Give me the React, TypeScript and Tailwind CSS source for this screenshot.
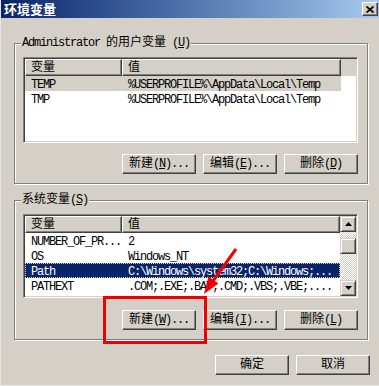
import type { ReactNode } from 'react'

const userVars = [
  { name: 'TEMP', value: '%USERPROFILE%\\AppData\\Local\\Temp', state: 'muted' },
  { name: 'TMP', value: '%USERPROFILE%\\AppData\\Local\\Temp', state: '' },
]

const sysVars = [
  { name: 'NUMBER_OF_PR...', value: '2', state: '' },
  { name: 'OS', value: 'Windows_NT', state: '' },
  { name: 'Path', value: 'C:\\Windows\\system32;C:\\Windows;...', state: 'active' },
  { name: 'PATHEXT', value: '.COM;.EXE;.BAT;.CMD;.VBS;.VBE;....', state: '' },
]

// ascii text, roughly the width of the old bitmap font
function A({ children }: { children: ReactNode }) {
  return <span className="text-[12px] tracking-[-1.2px]">{children}</span>
}

function Btn({ label, hotkey, dots, className = '' }: { label: string; hotkey?: string; dots?: boolean; className?: string }) {
  return (
    <div
      className={`w-[74px] h-[20px] flex items-center justify-center bg-[#d4d0c8] border border-t-white border-l-white border-r-[#404040] border-b-[#404040] shadow-[inset_-1px_-1px_0_#808080] text-[12px] leading-[14px] text-black ${className}`}
    >
      <span>{label}</span>
      {hotkey && (
        <A>
          {' '}(<span className="underline">{hotkey}</span>){dots ? '...' : ''}
        </A>
      )}
    </div>
  )
}

function Group({ label, children, className = '' }: { label: ReactNode; children: ReactNode; className?: string }) {
  return (
    <div className={`relative w-[354px] border border-[#808080] shadow-[inset_1px_1px_0_#fff,1px_1px_0_#fff] pt-[13px] pl-[8px] pr-[9px] pb-[9px] ${className}`}>
      <div className="absolute -top-[8px] left-[6px] bg-[#d4d0c8] px-[1px] text-[12px] leading-[14px] text-black whitespace-nowrap">
        {label}
      </div>
      {children}
    </div>
  )
}

function Row({ name, value, state, colTwo }: { name: string; value: string; state: string; colTwo: string }) {
  const tone =
    state === 'active'
      ? 'bg-[#0a246a] text-white outline-1 outline-dotted outline-[#d4d0c8] -outline-offset-1'
      : state === 'muted'
        ? 'bg-[#d4d0c8] text-black'
        : 'text-black'
  return (
    <div className={`flex h-[15px] items-center w-fit ${tone}`}>
      <div className="w-[97px] pl-[6px] whitespace-nowrap overflow-hidden">
        <A>{name}</A>
      </div>
      <div className={`${colTwo} pl-[6px] whitespace-nowrap overflow-hidden`}>
        <A>{value}</A>
      </div>
    </div>
  )
}

function HeadCell({ children, className = '' }: { children?: ReactNode; className?: string }) {
  return (
    <div
      className={`h-[17px] flex items-center border border-t-white border-l-white border-r-[#404040] border-b-[#404040] shadow-[inset_-1px_-1px_0_#808080] text-[12px] leading-[14px] text-black ${className}`}
    >
      {children}
    </div>
  )
}

function ListBox({ rows, scroll, height }: { rows: typeof userVars; scroll?: boolean; height: string }) {
  const colTwo = scroll ? 'w-[218px]' : 'w-[219px]'
  return (
    <div
      className={`w-[335px] ${height} bg-white border border-t-[#808080] border-l-[#808080] border-r-white border-b-white shadow-[inset_1px_1px_0_#404040,inset_-1px_-1px_0_#d4d0c8] p-[1px] flex overflow-hidden`}
    >
      <div className="flex-1 flex flex-col">
        <div className="flex bg-[#d4d0c8]">
          <HeadCell className="w-[97px] pl-[5px]">变量</HeadCell>
          <HeadCell className={`${colTwo} pl-[5px]`}>值</HeadCell>
          {!scroll && <div className="flex-1 h-[17px] bg-[#d4d0c8]" />}
        </div>
        {rows.map((r) => (
          <Row key={r.name} {...r} colTwo={colTwo} />
        ))}
      </div>
      {scroll && (
        <div className="w-[16px] flex flex-col bg-[repeating-conic-gradient(#d4d0c8_0_25%,#ffffff_0_50%)] bg-size-[2px_2px]">
          <ScrollBtn up />
          <div className="flex-1 pt-[6px]">
            <div className="h-[16px] bg-[#d4d0c8] border border-t-[#d4d0c8] border-l-[#d4d0c8] border-r-[#404040] border-b-[#404040] shadow-[inset_1px_1px_0_#fff,inset_-1px_-1px_0_#808080]" />
          </div>
          <ScrollBtn />
        </div>
      )}
    </div>
  )
}

function ScrollBtn({ up }: { up?: boolean }) {
  return (
    <div className="h-[16px] flex items-center justify-center bg-[#d4d0c8] border border-t-[#d4d0c8] border-l-[#d4d0c8] border-r-[#404040] border-b-[#404040] shadow-[inset_1px_1px_0_#fff,inset_-1px_-1px_0_#808080]">
      <svg width="7" height="4" viewBox="0 0 7 4">
        <polygon points={up ? '3.5,0 7,4 0,4' : '0,0 7,0 3.5,4'} fill="#000" />
      </svg>
    </div>
  )
}

export default function App() {
  return (
    <div className="relative w-[379px] h-[386px] overflow-hidden bg-[#d4d0c8] flex flex-col border-l border-b border-l-[#e8e6e0] border-b-[#e8e6e0] font-['Liberation_Mono','Noto_Sans_CJK_SC',monospace]">
      {/* title bar */}
      <div className="h-[18px] shrink-0 flex items-center justify-between pl-[3px] pr-[1px] bg-linear-to-r from-[#0a246a] to-[#a6caf0]">
        <span className="text-white font-bold text-[13px] leading-[16px] font-['Noto_Sans_CJK_SC',sans-serif]">环境变量</span>
        <div className="w-[16px] h-[14px] flex items-center justify-center bg-[#d4d0c8] border border-t-white border-l-white border-r-[#404040] border-b-[#404040] shadow-[inset_-1px_-1px_0_#808080]">
          <svg width="8" height="7" viewBox="0 0 8 7">
            <path d="M0.5 0.5 L7.5 6.5 M7.5 0.5 L0.5 6.5" stroke="#000" strokeWidth="1.8" />
          </svg>
        </div>
      </div>

      <div className="flex flex-col pl-[13px] pt-[25px]">
        <Group
          label={
            <>
              <A>Administrator </A>的用户变量<A> (<span className="underline">U</span>)</A>
            </>
          }
        >
          <ListBox rows={userVars} height="h-[86px]" />
          <div className="flex justify-end gap-[7px] mt-[11px]">
            <Btn label="新建" hotkey="N" dots />
            <Btn label="编辑" hotkey="E" dots />
            <Btn label="删除" hotkey="D" />
          </div>
        </Group>

        <Group
          className="mt-[16px]"
          label={
            <>
              系统变量<A>(<span className="underline">S</span>)</A>
            </>
          }
        >
          <ListBox rows={sysVars} scroll height="h-[84px]" />
          <div className="flex justify-end gap-[7px] mt-[12px]">
            <Btn label="新建" hotkey="W" dots />
            <Btn label="编辑" hotkey="I" dots />
            <Btn label="删除" hotkey="L" />
          </div>
        </Group>

        <div className="flex justify-end gap-[7px] mt-[15px] w-[356px]">
          <Btn label="确定" />
          <Btn label="取消" />
        </div>
      </div>

      {/* red annotation on top of the dialog */}
      <div className="absolute left-[102px] top-[296px] w-[104px] h-[48px] border-[3px] border-[#f00000]" />
      <svg className="absolute left-0 top-0 pointer-events-none" width="379" height="386">
        <line x1="235" y1="249" x2="212" y2="281" stroke="#f00000" strokeWidth="3" />
        <polygon points="203,294 207.5,276.5 217.3,283.5" fill="#f00000" />
      </svg>
    </div>
  )
}
